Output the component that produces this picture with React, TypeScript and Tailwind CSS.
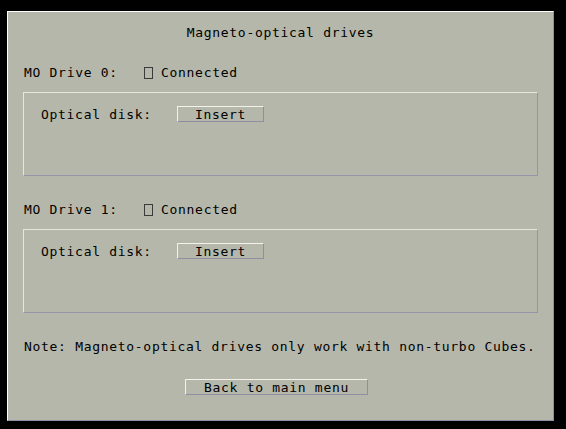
import React from 'react';

const font = { fontFamily: '"DejaVu Sans Mono", "Liberation Mono", monospace' };

function Raised({ label, className }: { label: string; className: string }) {
  return (
    <div
      className={`flex items-center justify-center h-[16px] border border-t-[#f2f2ea] border-l-[#f2f2ea] border-r-[#8e8ea4] border-b-[#8e8ea4] ${className}`}
    >
      <span className="leading-[15px]">{label}</span>
    </div>
  );
}

function DriveRow({ index }: { index: number }) {
  return (
    <>
      <div className="flex items-center h-[14px] pl-[16px]">
        <span className="w-[120px] leading-[16px] h-[14px]">MO Drive {index}:</span>
        <span className="w-[9px] h-[12px] mt-[1px] border border-[#3a3a3a] box-border" />
        <span className="ml-[8px] leading-[16px] h-[14px]">Connected</span>
      </div>
      <div className="mt-[13px] ml-[15px] w-[515px] h-[84px] border border-t-[#e6e6dc] border-l-[#e6e6dc] border-r-[#9494aa] border-b-[#9494aa]">
        <div className="flex items-center pt-[13px] pl-[17px]">
          <span className="w-[136px] leading-[15px]">Optical disk:</span>
          <Raised label="Insert" className="w-[87px]" />
        </div>
      </div>
    </>
  );
}

export default function App() {
  return (
    <div className="w-[566px] h-[429px] bg-black pt-[11px] pl-[7px] overflow-hidden" style={font}>
      <div className="w-[547px] h-[410px] bg-[#b5b7aa] text-black text-[13px] tracking-[0.7px] border border-t-white border-l-white border-r-[#8e8ea4] border-b-[#8e8ea4] flex flex-col">
        <div className="mt-[13px] h-[14px] leading-[16px] text-center">Magneto-optical drives</div>

        <div className="mt-[26px]">
          <DriveRow index={0} />
        </div>

        <div className="mt-[26px]">
          <DriveRow index={1} />
        </div>

        <div className="mt-[26px] h-[14px] leading-[16px] pl-[16px]">
          Note: Magneto-optical drives only work with non-turbo Cubes.
        </div>

        <div className="mt-[26px] pl-[177px]">
          <Raised label="Back to main menu" className="w-[183px]" />
        </div>
      </div>
    </div>
  );
}
